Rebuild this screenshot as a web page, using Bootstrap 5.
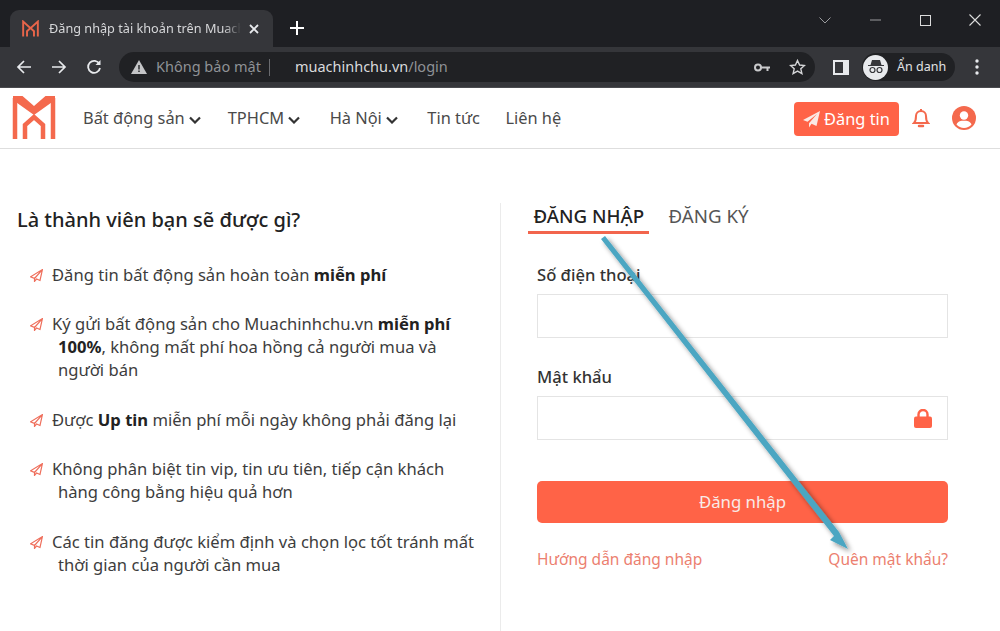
<!DOCTYPE html>
<html lang="vi">

<head>
  <meta charset="UTF-8">
  <meta name="viewport" content="width=device-width, initial-scale=1.0">
  <title>Đăng nhập tài khoản trên Muachinhchu</title>
  <link href="https://cdn.jsdelivr.net/npm/bootstrap@5.3.3/dist/css/bootstrap.min.css" rel="stylesheet">
  <style>
    html, body { height: 631px; overflow: hidden; }
    body { font-family: "Noto Sans", "Open Sans", sans-serif; color: #3a3a3a; background: #fff; position: relative; }

    /* browser chrome */
    .tab-strip { height: 47px; background: #1e1f23; padding: 10px 0 0 10px; }
    .tab-active { width: 263px; height: 37px; background: #35363a; border-radius: 9px 9px 0 0; padding: 0 14px 0 12px; color: #d6d7d9; font-size: 12.7px; }
    .tab-title { width: 194px; margin-left: 10px; white-space: nowrap; -webkit-mask-image: linear-gradient(to right, #000 175px, transparent 192px); mask-image: linear-gradient(to right, #000 175px, transparent 192px); }
    .tab-new { margin-left: 17px; margin-top: -2px; }
    .win-btns { margin-left: auto; margin-top: -10px; height: 37px; }
    .win-btn { width: 50px; }
    .toolbar { height: 41px; background: #35363a; padding: 0 12px 0 14px; border-bottom: 1px solid #4a4b4f; }
    .tool-ico { width: 20px; margin-right: 15px; }
    .omnibox { width: 696px; height: 30px; background: #202124; border-radius: 15px; padding: 0 9px 0 12px; font-size: 14.5px; color: #8f9296; }
    .omni-warn { margin-right: 9px; }
    .omni-sep { width: 1px; height: 17px; background: #6a6b6f; margin: 0 25px 0 8px; }
    .omni-host { color: #d9dadc; }
    .key-ico { margin-right: 19px; }
    .side-ico { margin-left: 18px; }
    .incog-pill { width: 93px; height: 28px; margin-left: 13px; background: #202124; border-radius: 14px; font-size: 12.5px; color: #e2e3e5; padding-left: 1px; }
    .incog-circle { width: 25px; height: 25px; border-radius: 50%; background: #e8eaed; margin-right: 9px; }
    .kebab-ico { margin-left: 20px; }

    /* site header */
    .site-nav { height: 61px; padding: 0 24px 0 12px !important; border-bottom: 1px solid #dedede; }
    .site-logo { width: 44px; height: 44px; margin-right: 27px; margin-top: -2px; }
    .site-link { font-size: 16.4px; color: #4a4a4a; padding: 0; margin-right: 27px; text-decoration: none; white-space: nowrap; }
    .site-link svg { margin-left: 4px; vertical-align: 0; }
    .site-link-wide { margin-right: 29.5px; }
    .site-link-tight { margin-right: 25.5px; }
    .btn-post { background: #ff6347; color: #fff; font-size: 16.4px; border-radius: 4px; width: 105px; height: 34px; padding: 0; border: 0; margin-top: 2px; }
    .btn-post:hover { background: #ff6347; color: #fff; }
    .bell-ico { margin: 0 22px 0 13px; }

    /* content */
    .login-wrap { padding-top: 54px; }
    .benefits { width: 501px; height: 428px; border-right: 1px solid #ebebeb; padding-left: 17px; }
    .benefits-title { font-size: 20px; font-weight: 500; color: #222; line-height: 28px; margin: 0 0 28.5px; padding-top: 3px; }
    .benefits-list { list-style: none; margin: 0; padding: 0 0 0 41px; font-size: 16.6px; line-height: 23px; color: #3d3d3d; width: 463px; }
    .benefits-list li { margin-bottom: 26.5px; }
    .benefits-list b { color: #222; font-weight: 700; }
    .plane-ico { margin-left: -28px; margin-right: 9px; vertical-align: -1px; }

    .login-pane { width: 411px; margin-left: 36px; }
    .auth-tabs { margin-left: -9px; margin-bottom: 30px; }
    .auth-tab { font-size: 18.7px; color: #555; height: 31px; line-height: 26px; padding: 0 5px 0 5.5px; margin-right: 14px; text-decoration: none; }
    .auth-tab.is-active { color: #222; font-weight: 500; border-bottom: 3px solid #f2654d; }
    .field-label { font-size: 16.6px; font-weight: 500; color: #333; margin-bottom: 8px; line-height: 22px; display: block; }
    .field-input { height: 44px; border: 1px solid #e4e4e4; border-radius: 0; }
    .field-gap { margin-bottom: 28px; }
    .field-lock { right: 16px; top: 13px; }
    .btn-login { background: #ff6347; color: #f9eae6; font-size: 16.8px; height: 42px; border: 0; border-radius: 5px; margin-top: 41px; }
    .btn-login:hover { background: #ff6347; color: #f9eae6; }
    .aux-links { margin-top: 25px; font-size: 15.5px; }
    .aux-links a { color: #ec7f70; text-decoration: none; }

    .arrow-over { position: absolute; left: 0; top: 0; pointer-events: none; }
  </style>
</head>

<body>
  <div class="tab-strip d-flex">
    <div class="tab-active d-flex align-items-center">
      <svg width="17" height="17" viewBox="0 0 44 44" fill="none" stroke="#e8654a" stroke-width="5">
        <path d="M3 43V4L22 21L41 4V43M13 43V29L22 21L31 29V43"/>
      </svg>
      <span class="tab-title">Đăng nhập tài khoản trên Muach</span>
      <svg class="ms-auto" width="10" height="10" viewBox="0 0 10 10" stroke="#e8eaed" stroke-width="1.8"><path d="M1 1L9 9M9 1L1 9"/></svg>
    </div>
    <svg class="tab-new align-self-center" width="14" height="14" viewBox="0 0 14 14" stroke="#fff" stroke-width="2"><path d="M7 0V14M0 7H14"/></svg>
    <div class="win-btns d-flex align-items-center">
      <div class="win-btn text-center"><svg width="12" height="7" viewBox="0 0 12 7" fill="none" stroke="#9a9b9e" stroke-width="1"><path d="M.5 .5L6 6L11.5 .5"/></svg></div>
      <div class="win-btn text-center"><svg width="11" height="2" viewBox="0 0 11 2" stroke="#9a9b9e"><path d="M0 1H11"/></svg></div>
      <div class="win-btn text-center"><svg width="11" height="11" viewBox="0 0 11 11" fill="none" stroke="#dcdcdc"><rect x=".5" y=".5" width="10" height="10"/></svg></div>
      <div class="win-btn text-center"><svg width="12" height="12" viewBox="0 0 12 12" stroke="#dcdcdc" stroke-width="1.1"><path d="M.5 .5L11.5 11.5M11.5 .5L.5 11.5"/></svg></div>
    </div>
  </div>

  <div class="toolbar d-flex align-items-center">
    <svg class="tool-ico" width="20" height="16" viewBox="0 0 16 16" fill="none" stroke="#e8eaed" stroke-width="1.7"><path d="M15 8H2M8 2L2 8L8 14"/></svg>
    <svg class="tool-ico" width="20" height="16" viewBox="0 0 16 16" fill="none" stroke="#e8eaed" stroke-width="1.7"><path d="M1 8H14M8 2L14 8L8 14"/></svg>
    <svg class="tool-ico" width="20" height="16" viewBox="0 0 16 16" fill="none" stroke="#e8eaed" stroke-width="1.8"><path d="M13.4 5A6 6 0 1 0 14 9"/><path d="M14.5 1V6H9.5" fill="#e8eaed" stroke="none"/></svg>
    <div class="omnibox d-flex align-items-center">
      <svg class="omni-warn" width="16" height="14" viewBox="0 0 16 14"><path d="M8 0L16 14H0Z" fill="#c4c5c7"/><path d="M8 5V9.500M8 10.500V12" stroke="#202124" stroke-width="1.400"/></svg>
      <span>Không bảo mật</span>
      <span class="omni-sep"></span>
      <span><span class="omni-host">muachinhchu.vn</span>/login</span>
      <svg class="key-ico ms-auto" width="16" height="9" viewBox="0 0 16 9"><circle cx="4" cy="4.500" r="3" fill="none" stroke="#c9cacc" stroke-width="2"/><path d="M7 3.500H16V5.500H14.500V8H12.500V5.500H7Z" fill="#c9cacc"/></svg>
      <svg width="17" height="16" viewBox="0 0 17 16" fill="none" stroke="#d4d5d7" stroke-width="1.400"><path d="M8.500 1.500L10.600 6L15.500 6.500L11.800 9.800L12.900 14.600L8.500 12.100L4.100 14.600L5.200 9.800L1.500 6.500L6.400 6Z"/></svg>
    </div>
    <svg class="side-ico" width="16" height="15" viewBox="0 0 16 15"><rect width="16" height="15" fill="#e8eaed"/><rect x="2" y="2" width="8" height="11" fill="#35363a"/></svg>
    <div class="incog-pill d-flex align-items-center">
      <span class="incog-circle d-flex align-items-center justify-content-center">
        <svg width="16" height="14" viewBox="0 0 16 14"><path d="M4 0H12L13.500 5H16V6H0V5H2.500Z" fill="#35363a"/><circle cx="4.500" cy="10" r="2.500" fill="none" stroke="#35363a" stroke-width="1.200"/><circle cx="11.500" cy="10" r="2.500" fill="none" stroke="#35363a" stroke-width="1.200"/></svg>
      </span>
      <span>Ẩn danh</span>
    </div>
    <svg class="kebab-ico" width="4" height="16" viewBox="0 0 4 16" fill="#e8eaed"><circle cx="2" cy="2" r="1.700"/><circle cx="2" cy="8" r="1.700"/><circle cx="2" cy="14" r="1.700"/></svg>
  </div>

  <nav class="navbar site-nav bg-white flex-nowrap justify-content-start">
    <svg class="site-logo" viewBox="0 0 44 44" fill="none" stroke="#f4694d" stroke-width="4.500">
      <path d="M1 1H10.500L22 11L33.500 1H43V5L22 20L1 5Z" fill="#f4694d" stroke="none"/>
      <path d="M3 44V3M41 3V44"/>
      <path d="M13 44V30L22 22L31 30V44"/>
    </svg>
    <a class="site-link" href="#">Bất động sản<svg width="12" height="8" viewBox="0 0 12 8" fill="none" stroke="#333" stroke-width="2.200"><path d="M1 1.500L6 6.500L11 1.500"/></svg></a>
    <a class="site-link site-link-wide" href="#">TPHCM<svg width="12" height="8" viewBox="0 0 12 8" fill="none" stroke="#333" stroke-width="2.200"><path d="M1 1.500L6 6.500L11 1.500"/></svg></a>
    <a class="site-link site-link-wide" href="#">Hà Nội<svg width="12" height="8" viewBox="0 0 12 8" fill="none" stroke="#333" stroke-width="2.200"><path d="M1 1.500L6 6.500L11 1.500"/></svg></a>
    <a class="site-link site-link-tight" href="#">Tin tức</a>
    <a class="site-link" href="#">Liên hệ</a>
    <button class="btn btn-post ms-auto d-flex align-items-center justify-content-center" type="button">
      <svg class="me-1" width="17" height="17" viewBox="0 0 17 17" fill="#fbe9e4"><path d="M17 0L13.500 15L8.500 12.800L6 16.500V12.300L14 3L4.500 10.800L0 9Z"/></svg>
      Đăng tin
    </button>
    <svg class="bell-ico" width="18" height="20" viewBox="0 0 18 20" fill="none" stroke="#f4694d" stroke-width="2"><path d="M2 15C4 13 4 11 4 8A5 5 0 0 1 14 8C14 11 14 13 16 15Z"/><path d="M7 18H11" stroke-width="2.500" stroke-linecap="round"/><path d="M9 1V3"/></svg>
    <svg width="24" height="24" viewBox="0 0 24 24"><circle cx="12" cy="12" r="12" fill="#f4694d"/><circle cx="12" cy="9.500" r="4.200" fill="#fff"/><path d="M4.500 18.500C6 15 9 14.800 12 14.800S18 15 19.500 18.500A10 10 0 0 1 4.500 18.500Z" fill="#fff"/></svg>
  </nav>

  <main class="login-wrap d-flex">
    <section class="benefits">
      <h2 class="benefits-title">Là thành viên bạn sẽ được gì?</h2>
      <ul class="benefits-list">
        <li><svg class="plane-ico" width="13" height="13" viewBox="0 0 13 13" fill="none" stroke="#ef6f5c" stroke-width="1.200"><path d="M12.400 .6L10 11.500L6.500 10L4.500 12.400V9.500L.6 7.800Z M12.400 .6L4.500 9.500"/></svg>Đăng tin bất động sản hoàn toàn <b>miễn phí</b></li>
        <li><svg class="plane-ico" width="13" height="13" viewBox="0 0 13 13" fill="none" stroke="#ef6f5c" stroke-width="1.200"><path d="M12.400 .6L10 11.500L6.500 10L4.500 12.400V9.500L.6 7.800Z M12.400 .6L4.500 9.500"/></svg>Ký gửi bất động sản cho Muachinhchu.vn <b>miễn phí 100%</b>, không mất phí hoa hồng cả người mua và người bán</li>
        <li><svg class="plane-ico" width="13" height="13" viewBox="0 0 13 13" fill="none" stroke="#ef6f5c" stroke-width="1.200"><path d="M12.400 .6L10 11.500L6.500 10L4.500 12.400V9.500L.6 7.800Z M12.400 .6L4.500 9.500"/></svg>Được <b>Up tin</b> miễn phí mỗi ngày không phải đăng lại</li>
        <li><svg class="plane-ico" width="13" height="13" viewBox="0 0 13 13" fill="none" stroke="#ef6f5c" stroke-width="1.200"><path d="M12.400 .6L10 11.500L6.500 10L4.500 12.400V9.500L.6 7.800Z M12.400 .6L4.500 9.500"/></svg>Không phân biệt tin vip, tin ưu tiên, tiếp cận khách hàng công bằng hiệu quả hơn</li>
        <li><svg class="plane-ico" width="13" height="13" viewBox="0 0 13 13" fill="none" stroke="#ef6f5c" stroke-width="1.200"><path d="M12.400 .6L10 11.500L6.500 10L4.500 12.400V9.500L.6 7.800Z M12.400 .6L4.500 9.500"/></svg>Các tin đăng được kiểm định và chọn lọc tốt tránh mất thời gian của người cần mua</li>
      </ul>
    </section>

    <section class="login-pane">
      <div class="auth-tabs d-flex">
        <a class="auth-tab is-active" href="#">ĐĂNG NHẬP</a>
        <a class="auth-tab" href="#">ĐĂNG KÝ</a>
      </div>
      <form>
        <div class="field-gap">
          <label class="field-label">Số điện thoại</label>
          <input class="form-control field-input" type="text">
        </div>
        <div>
          <label class="field-label">Mật khẩu</label>
          <div class="position-relative">
            <input class="form-control field-input" type="password">
            <svg class="field-lock position-absolute" width="18" height="19" viewBox="0 0 18 19"><path d="M4.500 8V5.500A4.500 4.500 0 0 1 13.500 5.500V8" fill="none" stroke="#ff6347" stroke-width="2.400"/><rect y="7.500" width="18" height="11.500" rx="2" fill="#ff6347"/></svg>
          </div>
        </div>
        <button class="btn btn-login w-100" type="button">Đăng nhập</button>
        <div class="aux-links d-flex justify-content-between">
          <a href="#">Hướng dẫn đăng nhập</a>
          <a href="#">Quên mật khẩu?</a>
        </div>
      </form>
    </section>
  </main>

  <svg class="arrow-over" width="1000" height="631" viewBox="0 0 1000 631">
    <defs>
      <filter id="arrowShadow" x="-20%" y="-20%" width="140%" height="140%">
        <feDropShadow dx="3" dy="3" stdDeviation="2.500" flood-color="#000" flood-opacity=".45"/>
      </filter>
    </defs>
    <path d="M601 239L605 236L839 532L848 549L830 540L834 536Z" fill="#4ba6c2" filter="url(#arrowShadow)"/>
  </svg>
</body>

</html>
